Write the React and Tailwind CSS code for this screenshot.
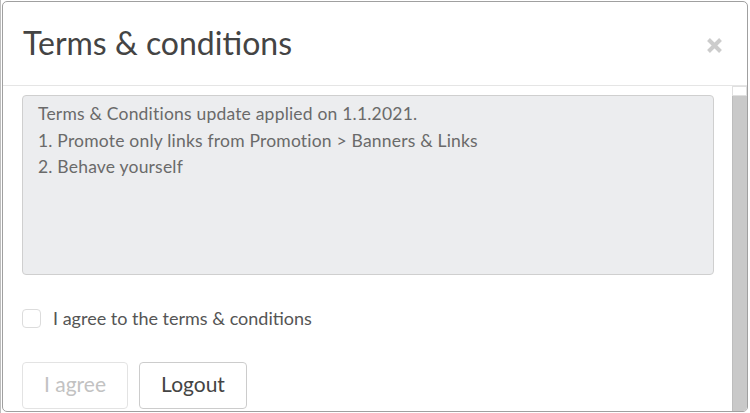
import React from "react";

export default function App() {
  return (
    <div className="w-[750px] h-[413px] overflow-hidden bg-white border-l border-[#bdbdbd]" style={{ fontFamily: "Lato, 'Open Sans', sans-serif" }}>
      <div className="ml-px mt-px w-[746px] h-[411px] flex flex-col rounded-[5px] border border-[#a0a0a0] bg-white overflow-hidden">
        {/* Header */}
        <div className="h-[84px] shrink-0 flex items-center justify-between pl-[20px] pr-[24px] border-b border-[#e5e5e5]">
          <h1 className="text-[32px] leading-none text-[#444] pb-[2px]">Terms &amp; conditions</h1>
          <svg width="17" height="17" viewBox="0 0 17 17" className="mt-[4px]">
            <path d="M2.5 2.5 L14.5 14.5 M14.5 2.5 L2.5 14.5" stroke="#cccccc" strokeWidth="4" strokeLinecap="butt" />
          </svg>
        </div>

        {/* Body */}
        <div className="flex flex-1 min-h-0">
          <div className="flex-1 pt-[9px] pl-[19px] pr-[18px]">
            <div className="h-[180px] rounded-[4px] border border-[#cfcfcf] bg-[#ecedef] pl-[15px] pt-[5px] text-[17.5px] leading-[26.5px] text-[#6a6a6a] tracking-[0.2px]">
              <div>Terms &amp; Conditions update applied on 1.1.2021.</div>
              <div>1. Promote only links from Promotion &gt; Banners &amp; Links</div>
              <div>2. Behave yourself</div>
            </div>

            <label className="mt-[30px] flex items-center gap-[12px]">
              <span className="w-[19px] h-[19px] rounded-[4px] border border-[#dcdcdc] bg-white" />
              <span className="text-[18px] text-[#555]">I agree to the terms &amp; conditions</span>
            </label>

            <div className="mt-[30px] flex gap-[11px]">
              <button className="w-[106px] h-[47px] rounded-[4px] border border-[#e3e3e3] text-[21px] text-[#c2c2c2] pb-[3px]">I agree</button>
              <button className="w-[108px] h-[47px] rounded-[4px] border border-[#cccccc] text-[21px] text-[#444] pb-[3px]">Logout</button>
            </div>
          </div>

          {/* Scrollbar */}
          <div className="w-[15px] shrink-0 flex flex-col bg-[#f4f4f4]">
            <div className="h-[10px] bg-white border border-[#e0e0e0]" />
            <div className="flex-1 bg-[#c9c9c9] border-l border-[#bdbdbd]" />
          </div>
        </div>
      </div>
    </div>
  );
}
